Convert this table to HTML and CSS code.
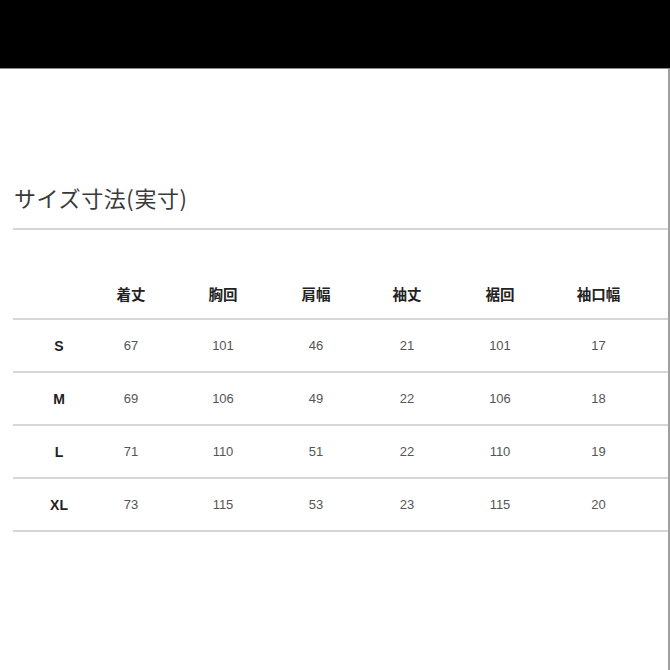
FILE: index.html
```html
<!DOCTYPE html>
<html lang="ja">
<head>
<meta charset="utf-8">
<link rel="stylesheet" href="styles.css">
</head>
<body>
<div class="topbar"></div>
<main class="sheet">
  <h1 class="title">サイズ寸法(実寸)</h1>
  <div class="table">
    <div class="row head">
      <div class="c c1"></div>
      <div class="c c2">着丈</div>
      <div class="c c3">胸回</div>
      <div class="c c4">肩幅</div>
      <div class="c c5">袖丈</div>
      <div class="c c6">裾回</div>
      <div class="c c7">袖口幅</div>
    </div>
    <div class="row">
      <div class="c c1 size">S</div>
      <div class="c c2">67</div>
      <div class="c c3">101</div>
      <div class="c c4">46</div>
      <div class="c c5">21</div>
      <div class="c c6">101</div>
      <div class="c c7">17</div>
    </div>
    <div class="row">
      <div class="c c1 size">M</div>
      <div class="c c2">69</div>
      <div class="c c3">106</div>
      <div class="c c4">49</div>
      <div class="c c5">22</div>
      <div class="c c6">106</div>
      <div class="c c7">18</div>
    </div>
    <div class="row">
      <div class="c c1 size">L</div>
      <div class="c c2">71</div>
      <div class="c c3">110</div>
      <div class="c c4">51</div>
      <div class="c c5">22</div>
      <div class="c c6">110</div>
      <div class="c c7">19</div>
    </div>
    <div class="row">
      <div class="c c1 size">XL</div>
      <div class="c c2">73</div>
      <div class="c c3">115</div>
      <div class="c c4">53</div>
      <div class="c c5">23</div>
      <div class="c c6">115</div>
      <div class="c c7">20</div>
    </div>
  </div>
</main>
</body>
</html>
```
FILE: styles.css
```css
html, body {
  margin: 0;
  padding: 0;
  background: #fff;
}
body {
  width: 670px;
  height: 670px;
  overflow: hidden;
  font-family: "Liberation Sans", "Noto Sans CJK JP", sans-serif;
}
.topbar {
  height: 68px;
  background: #000;
  border-bottom: 1px solid #8a8a8a;
}
.sheet {
  box-sizing: border-box;
  width: 670px;
  height: 601px;
  padding: 112px 0 0 13px;
  border-right: 2px solid #a0a0a0;
}
.title {
  margin: 0;
  padding: 0 0 15px 1px;
  font-family: "Noto Sans CJK JP", sans-serif;
  font-weight: 400;
  font-size: 22px;
  line-height: 32px;
  color: #3a3a3a;
  border-bottom: 2px solid #d6d6d6;
  width: 655px;
  box-sizing: border-box;
  letter-spacing: 0.6px;
}
.table {
  width: 655px;
}
.row {
  display: flex;
  height: 51px;
  align-items: center;
  border-bottom: 2px solid #d6d6d6;
  font-size: 13px;
  color: #555;
}
.row.head {
  height: 74px;
  align-items: flex-end;
  padding-bottom: 14px;
  font-family: "Noto Sans CJK JP", sans-serif;
  font-weight: 700;
  font-size: 14.5px;
  color: #222;
}
.c {
  text-align: center;
  line-height: 20px;
  flex: none;
}
.c1 { width: 92px; }
.c2 { width: 52px; }
.c3 { width: 132px; }
.c4 { width: 54px; }
.c5 { width: 128px; }
.c6 { width: 58px; }
.c7 { width: 139px; }
.size {
  font-weight: 700;
  font-size: 14px;
  color: #222;
}
```
